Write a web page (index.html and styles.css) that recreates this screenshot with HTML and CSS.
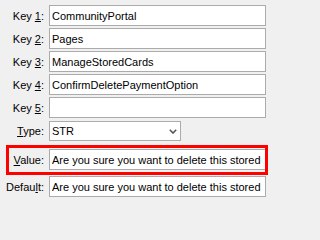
FILE: index.html
```html
<!DOCTYPE html>
<html>
<head>
<meta charset="utf-8">
<link rel="stylesheet" href="styles.css">
</head>
<body>
<div class="form">
  <div class="row"><label class="lbl">Key <u>1</u>:</label><input class="field" type="text" value="CommunityPortal"></div>
  <div class="row"><label class="lbl">Key <u>2</u>:</label><input class="field" type="text" value="Pages"></div>
  <div class="row"><label class="lbl">Key <u>3</u>:</label><input class="field" type="text" value="ManageStoredCards"></div>
  <div class="row"><label class="lbl">Key <u>4</u>:</label><input class="field" type="text" value="ConfirmDeletePaymentOption"></div>
  <div class="row"><label class="lbl">Key <u>5</u>:</label><input class="field" type="text" value=""></div>
  <div class="row row-type"><label class="lbl"><u>T</u>ype:</label>
    <div class="combo"><span class="combo-text">STR</span>
      <svg class="chev" width="8" height="5" viewBox="0 0 8 5"><polyline points="0.8,0.8 4,4 7.2,0.8" fill="none" stroke="#555" stroke-width="1.6"/></svg>
    </div>
  </div>
  <div class="row row-value"><label class="lbl"><u>V</u>alue:</label><input class="field" type="text" value="Are you sure you want to delete this stored payment option?"><span class="highlight"></span></div>
  <div class="row row-default"><label class="lbl">Defau<u>l</u>t:</label><input class="field" type="text" value="Are you sure you want to delete this stored payment option?"></div>
</div>
</body>
</html>
```

FILE: styles.css
```css
html, body {
  margin: 0;
  padding: 0;
  background: #f0f0f0;
}
body {
  font-family: "Liberation Sans", Arial, sans-serif;
  font-size: 11px;
  color: #000;
}
.form {
  width: 271px;
  box-sizing: border-box;
  display: flex;
  flex-direction: column;
  padding: 5px 5px 0 0;
}
.row {
  position: relative;
  display: flex;
  align-items: center;
  height: 21px;
  margin-bottom: 2px;
}
.lbl {
  width: 44px;
  flex: none;
  text-align: right;
  margin-right: 5px;
  white-space: nowrap;
}
.field {
  flex: 1;
  min-width: 0;
  height: 21px;
  box-sizing: border-box;
  border: 1px solid #ababab;
  background: #fff;
  padding: 0 2px;
  margin: 0;
  font: inherit;
  color: #000;
  outline: none;
}
.row-type {
  height: 20px;
  margin-top: 1px;
  margin-bottom: 0;
}
.combo {
  width: 132px;
  height: 20px;
  box-sizing: border-box;
  border: 1px solid #acacac;
  background: #fff;
  display: flex;
  align-items: center;
  justify-content: space-between;
  padding: 0 3px 0 2px;
}
.chev {
  display: block;
  margin-top: 1px;
}
.row-value {
  margin-top: 8px;
  margin-bottom: 6px;
}
.highlight {
  position: absolute;
  left: 6px;
  right: -2px;
  top: -4px;
  bottom: -5px;
  border: 3px solid #ff0000;
  pointer-events: none;
}
```
